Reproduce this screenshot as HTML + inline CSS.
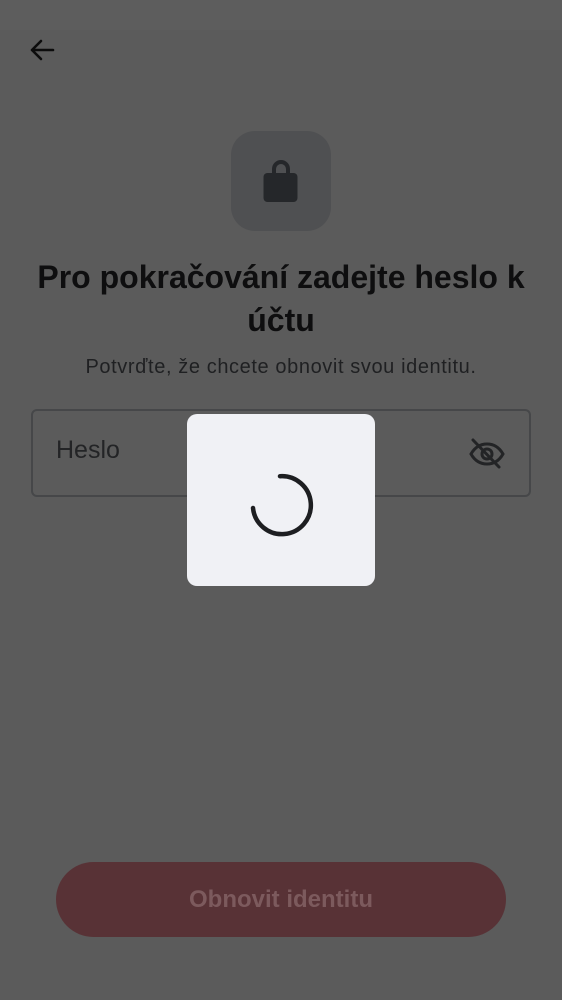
<!DOCTYPE html>
<html><head><meta charset="utf-8"><style>
html,body{margin:0;padding:0;}
body{width:562px;height:1000px;background:#5b5b5b;position:relative;overflow:hidden;font-family:"Liberation Sans",Roboto,sans-serif;}
.abs{position:absolute;}
h1{position:absolute;left:10px;right:10px;top:256px;margin:0;text-align:center;font-size:32px;line-height:43px;font-weight:bold;color:#0e0e0f;}
.sub{top:356px;left:0;right:0;text-align:center;font-size:20px;letter-spacing:0.6px;color:#1f2022;}
.field{left:31px;top:409px;width:496px;height:84px;border:2px solid #464749;border-radius:6px;}
.btn{left:56px;top:862px;width:450px;height:75px;border-radius:38px;background:#583236;color:#7c5a5d;font-size:24px;font-weight:bold;text-align:center;line-height:75px;}
.dlg{left:187px;top:414px;width:188px;height:172px;background:#f0f1f5;border-radius:10px;}
</style></head><body>
<div class="abs" style="left:0;top:0;width:562px;height:30px;background:#5d5d5d"></div>
<svg class="abs" style="left:28px;top:36px" width="30" height="30" viewBox="0 0 30 30"><path d="M25 14H4M13 5l-9 9 9 9" stroke="#0c0c0c" stroke-width="2.6" fill="none" stroke-linecap="round" stroke-linejoin="round"/></svg>
<div class="abs" style="left:231px;top:131px;width:100px;height:100px;border-radius:24px;background:#4f5052"></div>
<svg class="abs" style="left:260px;top:155px" width="42" height="50" viewBox="0 0 42 50"><path d="M14 19v-5a7 7 0 0 1 14 0v5" stroke="#25272a" stroke-width="4" fill="none"/><rect x="3.5" y="18" width="34" height="29" rx="4" fill="#25272a"/></svg>
<h1>Pro pokračování zadejte heslo k účtu</h1>
<div class="abs sub">Potvrďte, že chcete obnovit svou identitu.</div>
<div class="abs field"></div>
<div class="abs" style="left:56px;top:436px;font-size:25px;color:#232426">Heslo</div>
<svg class="abs" style="left:467px;top:436px" width="40" height="36" viewBox="0 0 40 36"><path d="M4 18c4-7 9-10 16-10s12 3 16 10c-4 7-9 10-16 10S8 25 4 18z" stroke="#232426" stroke-width="3" fill="none"/><circle cx="20" cy="18" r="5" stroke="#232426" stroke-width="3" fill="none"/><path d="M6 4l26 27" stroke="#232426" stroke-width="3" stroke-linecap="round"/></svg>
<div class="abs btn">Obnovit identitu</div>
<div class="abs dlg"></div>
<svg class="abs" style="left:241px;top:465px" width="80" height="80" viewBox="0 0 80 80"><path d="M39 11.2A29 29 0 1 1 12 43" stroke="#1d1e21" stroke-width="4.5" fill="none" stroke-linecap="round"/></svg>
</body></html>
